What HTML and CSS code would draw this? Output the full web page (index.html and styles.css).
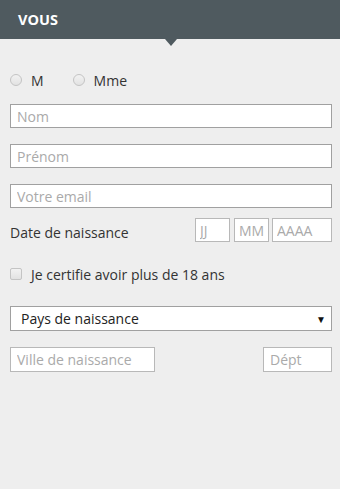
FILE: index.html
```html
<!DOCTYPE html>
<html lang="fr">
<head>
  <meta charset="UTF-8">
  <meta name="viewport" content="width=device-width, initial-scale=1.0">
  <title>Vous</title>
  <link rel="stylesheet" href="styles.css">
</head>
<body>

  <div class="header">
    <h2>VOUS</h2>
  </div>

  <form class="form">
    <div class="civilite">
      <label class="radio"><input type="radio" name="civ"> M</label>
      <label class="radio"><input type="radio" name="civ"> Mme</label>
    </div>

    <input type="text" class="field" placeholder="Nom">
    <input type="text" class="field" placeholder="Prénom">
    <input type="text" class="field" placeholder="Votre email">

    <div class="date-row">
      <span class="date-label">Date de naissance</span>
      <input type="text" class="field day" placeholder="JJ">
      <input type="text" class="field month" placeholder="MM">
      <input type="text" class="field year" placeholder="AAAA">
    </div>

    <label class="check"><input type="checkbox"> Je certifie avoir plus de 18 ans</label>

    <div class="select">
      <span>Pays de naissance</span>
      <span class="arrow">&#9660;</span>
    </div>

    <div class="birth-row">
      <input type="text" class="field city" placeholder="Ville de naissance">
      <input type="text" class="field dept" placeholder="Dépt">
    </div>
  </form>

</body>
</html>
```

FILE: styles.css
```css
body {
  margin: 0;
  background-color: #eeeeee;
  font-family: "Open Sans", Arial, sans-serif;
  font-size: 14px;
  color: #333;
}
.header {
  position: relative;
  height: 39px;
  background-color: #4f5a5f;
}
.header h2 {
  margin: 0;
  padding: 10px 0 0 18px;
  font-size: 14.5px;
  font-weight: bold;
  color: #fff;
  line-height: 20px;
}
.header:after {
  content: "";
  position: absolute;
  left: 165px;
  bottom: -7px;
  border-left: 6px solid transparent;
  border-right: 6px solid transparent;
  border-top: 7px solid #4f5a5f;
}
.form {
  padding: 30px 8px 0 10px;
}
.civilite {
  display: flex;
  gap: 29px;
  height: 22px;
  align-items: center;
  margin-bottom: 13px;
}
.radio, .check {
  display: flex;
  align-items: center;
  gap: 9px;
}
input[type="radio"], input[type="checkbox"] {
  appearance: none;
  margin: 0;
  width: 12px;
  height: 12px;
  border: 1px solid #c4c4c4;
  background: linear-gradient(#f2f2f2, #e2e2e2);
}
input[type="radio"] {
  border-radius: 50%;
}
input[type="checkbox"] {
  border-radius: 2px;
}
.field {
  display: block;
  box-sizing: border-box;
  width: 100%;
  height: 24px;
  margin: 0 0 16px 0;
  padding: 0 6px;
  border: 1px solid #a0a0a0;
  background: #fff;
  font-family: "Open Sans", Arial, sans-serif;
  font-size: 14px;
  color: #333;
}
.field::placeholder {
  color: #aaa;
}
.date-row {
  display: flex;
  align-items: center;
  margin-top: -6px;
  margin-bottom: 20px;
}
.date-row .field {
  margin: 0;
  padding: 0 4px;
  border-color: #b8b8b8;
}
.date-label {
  flex: 1;
  padding-top: 4px;
}
.day {
  width: 35px;
}
.month {
  width: 35px;
  margin-left: 4px !important;
}
.year {
  width: 60px;
  margin-left: 3px !important;
}
.check {
  height: 24px;
  gap: 9px;
  margin-bottom: 20px;
}
.select {
  display: flex;
  justify-content: space-between;
  align-items: center;
  box-sizing: border-box;
  height: 25px;
  padding: 0 5px 0 10px;
  border: 1px solid #a0a0a0;
  background: #fff;
  color: #222;
  margin-bottom: 16px;
}
.arrow {
  font-size: 10px;
  color: #111;
}
.birth-row {
  display: flex;
  justify-content: space-between;
}
.birth-row .field {
  height: 25px;
  border-color: #b8b8b8;
}
.city {
  width: 145px;
}
.dept {
  width: 69px;
}
```
